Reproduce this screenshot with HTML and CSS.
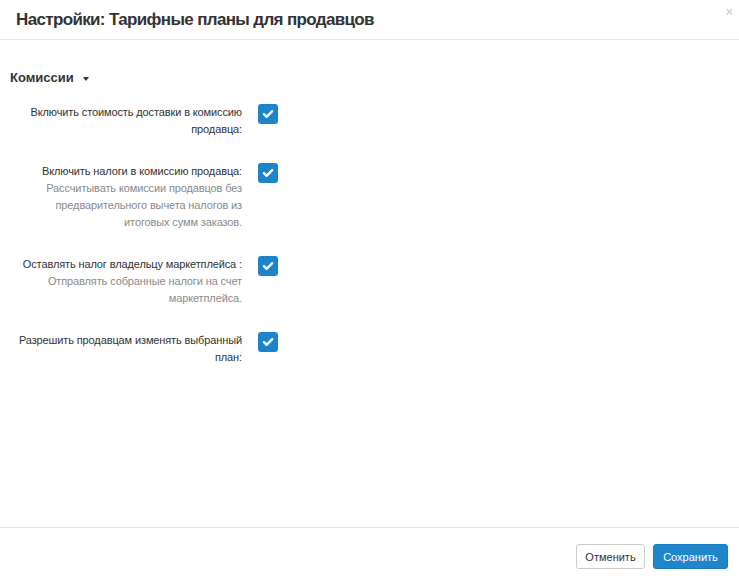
FILE: index.html
```html
<!DOCTYPE html>
<html lang="ru">
<head>
<meta charset="utf-8">
<title>Настройки</title>
<link rel="stylesheet" href="styles.css">
</head>
<body>
<div class="modal">
  <header class="modal-header">
    <h1 class="modal-title">Настройки: Тарифные планы для продавцов</h1>
    <span class="close">×</span>
  </header>
  <main class="modal-body">
    <h2 class="section-title">Комиссии <span class="caret"></span></h2>
    <div class="row">
      <div class="label">Включить стоимость доставки в комиссию продавца:</div>
      <span class="checkbox"><svg viewBox="0 0 20 20" width="20" height="20"><path d="M6 10.2l2.6 2.6L14.2 7.2" fill="none" stroke="#fff" stroke-width="2.4" stroke-linecap="round" stroke-linejoin="round"/></svg></span>
    </div>
    <div class="row">
      <div class="label">Включить налоги в комиссию продавца:<div class="desc">Рассчитывать комиссии продавцов без предварительного вычета налогов из итоговых сумм заказов.</div></div>
      <span class="checkbox"><svg viewBox="0 0 20 20" width="20" height="20"><path d="M6 10.2l2.6 2.6L14.2 7.2" fill="none" stroke="#fff" stroke-width="2.4" stroke-linecap="round" stroke-linejoin="round"/></svg></span>
    </div>
    <div class="row">
      <div class="label">Оставлять налог владельцу маркетплейса :<div class="desc">Отправлять собранные налоги на счет маркетплейса.</div></div>
      <span class="checkbox"><svg viewBox="0 0 20 20" width="20" height="20"><path d="M6 10.2l2.6 2.6L14.2 7.2" fill="none" stroke="#fff" stroke-width="2.4" stroke-linecap="round" stroke-linejoin="round"/></svg></span>
    </div>
    <div class="row">
      <div class="label">Разрешить продавцам изменять выбранный план:</div>
      <span class="checkbox"><svg viewBox="0 0 20 20" width="20" height="20"><path d="M6 10.2l2.6 2.6L14.2 7.2" fill="none" stroke="#fff" stroke-width="2.4" stroke-linecap="round" stroke-linejoin="round"/></svg></span>
    </div>
  </main>
  <footer class="modal-footer">
    <button class="btn btn-default">Отменить</button>
    <button class="btn btn-primary">Сохранить</button>
  </footer>
</div>
</body>
</html>
```
FILE: styles.css
```css
html, body {
  margin: 0;
  padding: 0;
  height: 100%;
  background: #fff;
}
body {
  font-family: "Liberation Sans", Arial, sans-serif;
  color: #333;
}
.modal {
  display: flex;
  flex-direction: column;
  height: 583px;
}
.modal-header {
  position: relative;
  height: 40px;
  box-sizing: border-box;
  border-bottom: 1px solid #e8e8e8;
  display: flex;
  align-items: center;
  padding: 0 16px;
}
.modal-title {
  margin: 0;
  font-size: 17px;
  font-weight: bold;
  letter-spacing: -0.65px;
  color: #333;
}
.close {
  position: absolute;
  right: 6px;
  top: 5px;
  font-size: 13px;
  font-weight: bold;
  color: #d6d6d6;
  line-height: 13px;
}
.modal-body {
  flex: 1;
  padding: 29px 0 0 10px;
}
.section-title {
  margin: 0 0 17px;
  font-size: 13px;
  font-weight: bold;
  line-height: 18px;
  display: flex;
  align-items: center;
  color: #333;
}
.caret {
  display: inline-block;
  margin-left: 9px;
  margin-top: 1px;
  width: 0;
  height: 0;
  border-left: 3.5px solid transparent;
  border-right: 3.5px solid transparent;
  border-top: 4px solid #333;
}
.row {
  display: flex;
  align-items: flex-start;
  padding-bottom: 25px;
}
.label {
  width: 232px;
  text-align: right;
  font-size: 11px;
  letter-spacing: -0.12px;
  line-height: 17px;
  color: #333;
}
.desc {
  color: #8a8a8a;
}
.checkbox {
  margin-left: 16px;
  width: 20px;
  height: 20px;
  border-radius: 3px;
  background: #1d84c9;
  display: flex;
}
.modal-footer {
  height: 56px;
  box-sizing: border-box;
  border-top: 1px solid #e5e5e5;
  display: flex;
  justify-content: flex-end;
  align-items: flex-start;
  padding: 16px 11px 0 0;
  gap: 8px;
}
.btn {
  font-family: "Liberation Sans", Arial, sans-serif;
  font-size: 11px;
  height: 25px;
  border-radius: 3px;
  padding: 0;
  cursor: pointer;
}
.btn-default {
  background: #fff;
  border: 1px solid #ccc;
  color: #333;
  width: 69px;
}
.btn-primary {
  background: #1f86cc;
  border: 1px solid #1a7cbf;
  color: #fff;
  width: 75px;
}
```
